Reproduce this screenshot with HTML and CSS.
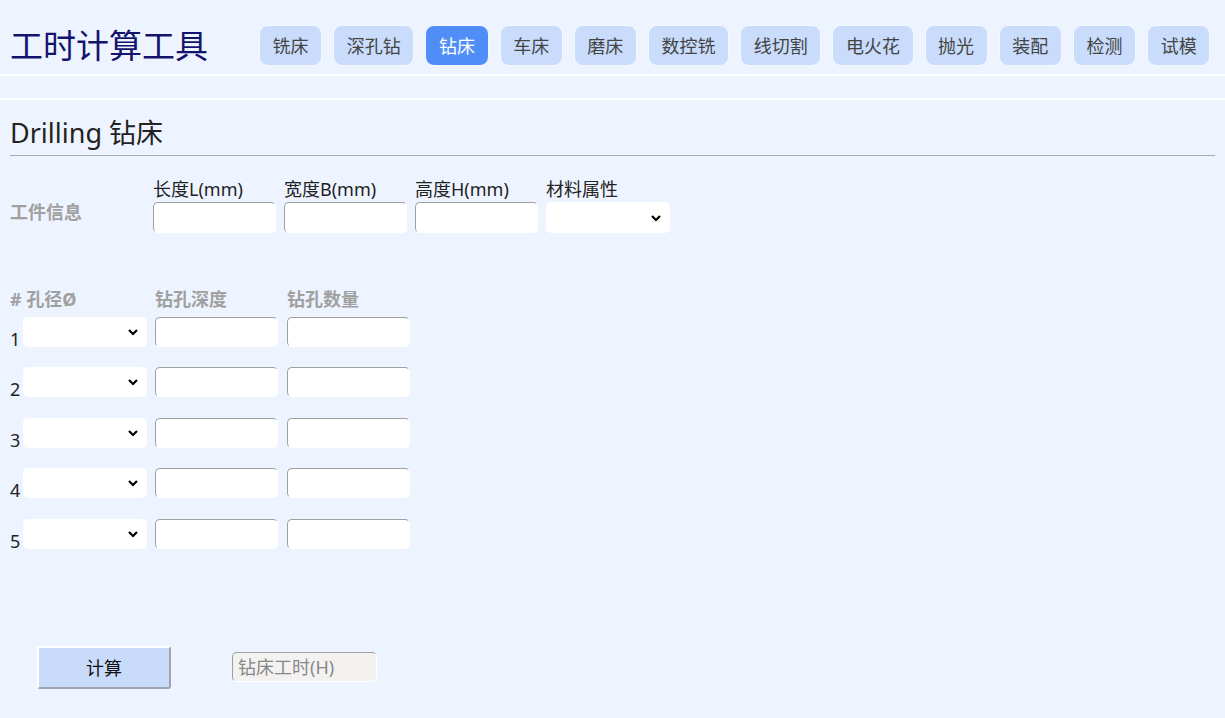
FILE: index.html
```html
<!DOCTYPE html>
<html lang="zh-CN">
<head>
  <meta charset="UTF-8">
  <title>工时计算工具</title>
  <link rel="stylesheet" href="styles.css">
</head>
<body>
  <div class="header">
    <h1 class="logo">工时计算工具</h1>
    <div class="nav">
      <button class="nav-btn">铣床</button>
      <button class="nav-btn">深孔钻</button>
      <button class="nav-btn active">钻床</button>
      <button class="nav-btn">车床</button>
      <button class="nav-btn">磨床</button>
      <button class="nav-btn">数控铣</button>
      <button class="nav-btn">线切割</button>
      <button class="nav-btn">电火花</button>
      <button class="nav-btn">抛光</button>
      <button class="nav-btn">装配</button>
      <button class="nav-btn">检测</button>
      <button class="nav-btn">试模</button>
    </div>
  </div>
  <div class="subbar"></div>

  <div class="content">
    <h2 class="page-title">Drilling 钻床</h2>

    <div class="part-info">
      <div class="section-label">工件信息</div>
      <div class="field">
        <label>长度L(mm)</label>
        <input type="text" class="text-in">
      </div>
      <div class="field">
        <label>宽度B(mm)</label>
        <input type="text" class="text-in">
      </div>
      <div class="field">
        <label>高度H(mm)</label>
        <input type="text" class="text-in">
      </div>
      <div class="field">
        <label>材料属性</label>
        <select class="sel"><option></option></select>
      </div>
    </div>

    <div class="holes">
      <div class="hole-head">
        <span class="h-dia"># 孔径Ø</span>
        <span class="h-depth">钻孔深度</span>
        <span class="h-count">钻孔数量</span>
      </div>
      <div id="holeRows"></div>
    </div>

    <div class="actions">
      <button class="calc-btn">计算</button>
      <input type="text" class="result" placeholder="钻床工时(H)" disabled>
    </div>
  </div>

  <script>
    const rows = document.getElementById('holeRows');
    for (let i = 1; i <= 5; i++) {
      rows.innerHTML += `
        <div class="hole-row">
          <span class="num">${i}</span>
          <select class="sel hole-sel"><option></option></select>
          <input type="text" class="text-in hole-in">
          <input type="text" class="text-in hole-in">
        </div>`;
    }
  </script>
</body>
</html>
```

FILE: styles.css
```css
body {
  margin: 0;
  background: #eef4ff;
  font-family: 'Noto Sans', 'Noto Sans CJK SC', sans-serif;
  color: #222;
}
.header {
  display: flex;
  align-items: center;
  padding: 25px 10px 8px;
  border-bottom: 2px solid #fff;
}
.logo {
  flex-shrink: 0;
  margin: 0 51px 0 0;
  font-size: 33px;
  font-weight: normal;
  line-height: 41px;
  white-space: nowrap;
  color: #14146e;
}
.nav {
  display: flex;
  gap: 11px;
}
.nav-btn {
  flex-shrink: 0;
  height: 41px;
  padding: 0 12.6px;
  font-family: inherit;
  font-size: 18px;
  line-height: 1;
  white-space: nowrap;
  color: #444;
  background: #c9dcfb;
  border: 1px solid #f4f8ff;
  border-radius: 9px;
  cursor: pointer;
}
.nav-btn.active {
  background: #4f8ef7;
  color: #fff;
}
.subbar {
  height: 22px;
  border-bottom: 2px solid #fff;
}
.content {
  padding: 0 10px;
}
.page-title {
  margin: 0;
  padding-top: 16px;
  padding-bottom: 5px;
  font-size: 27px;
  font-weight: normal;
  line-height: 34px;
  border-bottom: 1px solid #a9a9a9;
}
.part-info {
  display: flex;
  align-items: flex-end;
  margin-top: 21px;
}
.section-label {
  width: 143px;
  padding-bottom: 9px;
  font-size: 18px;
  font-weight: bold;
  line-height: 24px;
  color: #a0a0a0;
}
.field {
  display: flex;
  flex-direction: column;
  margin-right: 8px;
}
.field label {
  font-size: 18px;
  line-height: 25px;
  white-space: nowrap;
}
.text-in {
  box-sizing: border-box;
  width: 123px;
  height: 31px;
  margin: 0;
  padding: 0 6px;
  font-family: inherit;
  font-size: 16px;
  background: #fff;
  border: 1px solid;
  border-color: #a0a0a0 #fff #fff #a0a0a0;
  border-radius: 5px;
  outline: none;
}
.sel {
  box-sizing: border-box;
  width: 124px;
  height: 31px;
  margin: 0;
  padding: 0 6px;
  font-family: inherit;
  font-size: 16px;
  border: none;
  border-radius: 5px;
  background: #fff url("data:image/svg+xml,%3Csvg xmlns='http://www.w3.org/2000/svg' width='12' height='8' viewBox='0 0 12 8'%3E%3Cpath d='M2 2l4 4 4-4' fill='none' stroke='%23000' stroke-width='2.2'/%3E%3C/svg%3E") no-repeat right 8px center;
  appearance: none;
}
.holes {
  margin-top: 54px;
}
.hole-head {
  display: flex;
  font-size: 18px;
  font-weight: bold;
  line-height: 24px;
  color: #a0a0a0;
}
.h-dia { width: 145px; }
.h-depth { width: 132px; }
#holeRows {
  margin-top: 5px;
}
.hole-row {
  display: flex;
  align-items: flex-end;
  box-sizing: border-box;
  height: 50.5px;
  padding-bottom: 20px;
}
.num {
  width: 13px;
  font-size: 18px;
  line-height: 18px;
  margin-bottom: -1px;
}
.hole-sel {
  height: 30px;
  margin-right: 8px;
}
.hole-in {
  height: 30px;
  margin-right: 9px;
}
.actions {
  display: flex;
  align-items: center;
  margin-top: 77px;
  padding-left: 27px;
}
.calc-btn {
  width: 134px;
  height: 43px;
  margin-right: 61px;
  font-family: inherit;
  font-size: 18px;
  color: #111;
  background: #c9dbfb;
  border: 2px solid;
  border-color: #fff #a0a4b0 #a0a4b0 #fff;
  border-radius: 3px;
  cursor: pointer;
}
.result {
  box-sizing: border-box;
  width: 145px;
  height: 30px;
  padding: 0 5px;
  font-family: inherit;
  font-size: 18px;
  background: #f3f2f1;
  border: 1px solid;
  border-color: #a0a0a0 #fff #fff #a0a0a0;
  border-radius: 5px;
}
.result::placeholder {
  color: #888;
}
```
